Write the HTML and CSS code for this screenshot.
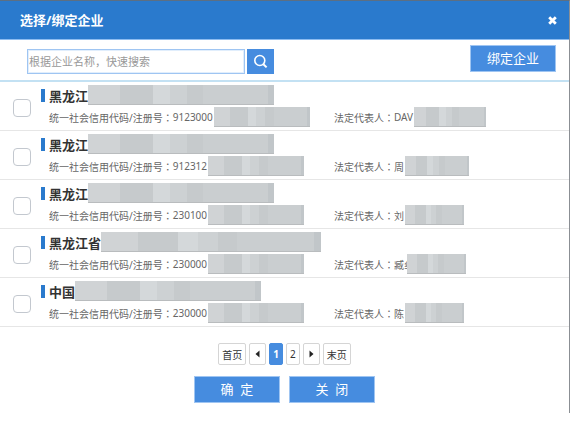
FILE: index.html
```html
<!DOCTYPE html>
<html lang="zh-CN">
<head>
  <meta charset="UTF-8" />
  <title>选择/绑定企业</title>
  <link rel="stylesheet" href="styles.css">
</head>
<body>

  <div class="dialog">
    <div class="dialog-title">
      <h1>选择/绑定企业</h1>
      <button type="button" class="close" aria-label="关闭窗口">
        <svg width="9" height="9" viewBox="0 0 9 9"><path d="M1.2 1.2 L7.8 7.8 M7.8 1.2 L1.2 7.8" stroke="#fff" stroke-width="2.8" /></svg>
      </button>
    </div>

    <div class="toolbar">
      <form class="search">
        <input type="text" class="search-input" placeholder="根据企业名称，快速搜索" aria-label="企业名称" />
        <button type="button" class="search-btn" aria-label="搜索">
          <svg width="15" height="15" viewBox="0 0 15 15" fill="none" stroke="#fff"><circle cx="6.8" cy="6.5" r="5" stroke-width="1.6" /><path d="M10.4 10.2 L13.6 13.4" stroke-width="2" /></svg>
        </button>
      </form>
      <button type="button" class="btn">绑定企业</button>
    </div>

    <ul class="company-list">
      <li class="company">
        <input type="checkbox" id="c1" />
        <div class="info">
          <label class="name" for="c1">黑龙江<i class="mask mask-name"></i></label>
          <div class="detail">
            <span>统一社会信用代码/注册号<b lang="zh-TW">：</b>9123000<i class="mask mask-code"></i></span>
            <span>法定代表人<b lang="zh-TW">：</b>DAV<i class="mask mask-person-long"></i></span>
          </div>
        </div>
      </li>
      <li class="company">
        <input type="checkbox" id="c2" />
        <div class="info">
          <label class="name" for="c2">黑龙江<i class="mask mask-name"></i></label>
          <div class="detail">
            <span>统一社会信用代码/注册号<b lang="zh-TW">：</b>912312<i class="mask mask-code"></i></span>
            <span>法定代表人<b lang="zh-TW">：</b>周<i class="mask mask-person-mid"></i></span>
          </div>
        </div>
      </li>
      <li class="company">
        <input type="checkbox" id="c3" />
        <div class="info">
          <label class="name" for="c3">黑龙江<i class="mask mask-name"></i></label>
          <div class="detail">
            <span>统一社会信用代码/注册号<b lang="zh-TW">：</b>230100<i class="mask mask-code"></i></span>
            <span>法定代表人<b lang="zh-TW">：</b>刘<i class="mask mask-person"></i></span>
          </div>
        </div>
      </li>
      <li class="company">
        <input type="checkbox" id="c4" />
        <div class="info">
          <label class="name" for="c4">黑龙江省<i class="mask mask-name-long"></i></label>
          <div class="detail">
            <span>统一社会信用代码/注册号<b lang="zh-TW">：</b>230000<i class="mask mask-code"></i></span>
            <span>法定代表人<b lang="zh-TW">：</b>臧纟<i class="mask mask-person mask-over"></i></span>
          </div>
        </div>
      </li>
      <li class="company">
        <input type="checkbox" id="c5" />
        <div class="info">
          <label class="name" for="c5">中国<i class="mask mask-name"></i></label>
          <div class="detail">
            <span>统一社会信用代码/注册号<b lang="zh-TW">：</b>230000<i class="mask mask-code"></i></span>
            <span>法定代表人<b lang="zh-TW">：</b>陈<i class="mask mask-person"></i></span>
          </div>
        </div>
      </li>
    </ul>

    <div class="pager">
      <a href="#">首页</a>
      <a href="#" class="arrow" aria-label="上一页"><svg width="5" height="8" viewBox="0 0 5 8"><path d="M4.5 0.5 V7.5 L0.5 4 Z" fill="#222" /></svg></a>
      <a href="#" class="current">1</a>
      <a href="#">2</a>
      <a href="#" class="arrow" aria-label="下一页"><svg width="5" height="8" viewBox="0 0 5 8"><path d="M0.5 0.5 V7.5 L4.5 4 Z" fill="#222" /></svg></a>
      <a href="#">末页</a>
    </div>

    <div class="actions">
      <button type="button" class="btn">确&nbsp;&nbsp;定</button>
      <button type="button" class="btn">关&nbsp;&nbsp;闭</button>
    </div>
  </div>

</body>
</html>
```

FILE: styles.css
```css
* {
  box-sizing: border-box;
}
body {
  margin: 0;
  background: #fff;
  color: #666;
  font-family: "Noto Sans", "Noto Sans CJK SC", sans-serif;
  font-size: 10px;
}
button,
input {
  font-family: inherit;
}
button {
  padding: 0;
  border: none;
  cursor: pointer;
}
svg {
  display: block;
}
.dialog {
  border-top: 1px solid #5c6f83;
  border-right: 1px solid #8b8f94;
  padding-bottom: 10px;
}
.dialog-title {
  display: flex;
  align-items: center;
  justify-content: space-between;
  height: 39px;
  padding: 0 12px 0 20px;
  background: #2a7acd;
  border-bottom: 1px solid #8dbcf0;
}
.dialog-title h1 {
  margin: 0;
  color: #fff;
  font-size: 13px;
  line-height: 20px;
}
.close {
  background: none;
}
.toolbar {
  display: flex;
  justify-content: space-between;
  height: 42px;
  padding: 5px 13px 0 27px;
  border-bottom: 2px solid #c3e1f3;
}
.search {
  display: flex;
  gap: 2px;
  margin-top: 4px;
}
.search-input {
  width: 218px;
  height: 25px;
  padding: 0 1px;
  border: 1px solid #9fc5f2;
  outline: 1px solid #e1eefc;
  outline-offset: -2px;
  font-size: 11px;
}
.search-input::placeholder {
  color: #999;
}
.search-btn {
  display: flex;
  align-items: center;
  justify-content: center;
  width: 27px;
  height: 25px;
  background: #468cdf;
}
.btn {
  width: 86px;
  height: 27px;
  border: 1px solid #9fc5f2;
  background: #468cdf;
  color: #fff;
  font-size: 13px;
  line-height: 25px;
}
.company-list {
  margin: 0;
  padding: 0;
  list-style: none;
}
.company {
  display: flex;
  align-items: center;
  gap: 10px;
  height: 49px;
  padding-left: 13px;
  border-bottom: 1px solid #e6e6e6;
}
.company input {
  appearance: none;
  width: 18px;
  height: 18px;
  margin: 4px 0 0;
  border: 1px solid #c3c8cf;
  border-radius: 4px;
  background: #fff;
}
.company input:checked {
  background: #468cdf;
}
.info {
  flex: 1;
}
.name {
  display: flex;
  align-items: center;
  height: 20px;
  margin-bottom: 2px;
  color: #333;
  font-size: 13px;
  font-weight: bold;
}
.name::before {
  content: "";
  width: 4px;
  height: 13px;
  margin-right: 4px;
  background: #2a7acd;
}
.detail {
  display: grid;
  grid-template-columns: 285px 1fr;
  padding-left: 8px;
}
.detail span {
  display: flex;
  align-items: center;
  height: 20px;
}
.detail b {
  font-family: "Noto Sans CJK TC", sans-serif;
  font-weight: normal;
}

/* hidden parts of the names and numbers */
.mask {
  height: 20px;
  border-bottom: 1px solid #b9bcbe;
  background: linear-gradient(to right, #d0d3d5 17%, #c6cacc 17% 35%, #d4d8da 35% 44%, #cdd1d3 44% 53%, #c6cacc 53% 62%, #caced0 62% 97%, #c1c6c9 97%);
}
.detail .mask {
  margin-left: 1px;
}
.detail .mask-over {
  z-index: 1;
  margin-left: -7px;
}
.mask-name {
  width: 186px;
}
.mask-name-long {
  width: 220px;
}
.mask-code {
  width: 96px;
}
.mask-person {
  width: 59px;
}
.mask-person-mid {
  width: 64px;
}
.mask-person-long {
  width: 72px;
}

.pager {
  display: flex;
  justify-content: center;
  gap: 3px;
  margin-top: 16px;
}
.pager a {
  display: flex;
  align-items: center;
  height: 22px;
  padding: 0 3px;
  border: 1px solid #d5d5d5;
  border-radius: 2px;
  color: #333;
  text-decoration: none;
}
.pager .arrow {
  padding: 0 5px;
}
.pager .current {
  border-color: #468cdf;
  background: #468cdf;
  color: #fff;
  font-weight: bold;
}
.actions {
  display: flex;
  justify-content: center;
  gap: 9px;
  margin-top: 11px;
}
```
